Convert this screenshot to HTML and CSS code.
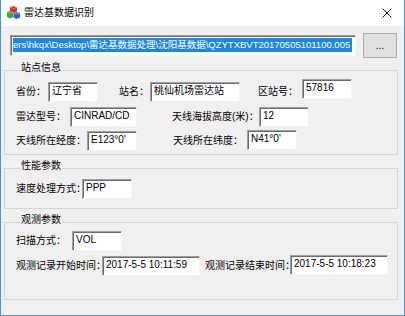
FILE: index.html
```html
<!DOCTYPE html>
<html>
<head>
    <meta charset="utf-8">
    <title>雷达基数据识别</title>
    <link rel="stylesheet" href="styles.css">
</head>
<body>
    <div class="window">
        <div class="titlebar">
            <svg class="app-icon" width="13" height="13" viewBox="0 0 13 13">
                <path d="M3 1 L7 0 L10 1.5 L10 5.5 L6.5 7 L3 5.5 Z" fill="#d9342b"/>
                <path d="M3 1 L6.5 2.5 L10 1.5" fill="none" stroke="#f08a80" stroke-width="0.8"/>
                <path d="M0 6 L3 5 L6 6 L6 11 L3 12.5 L0 11 Z" fill="#3aa83a"/>
                <path d="M0 6 L3 7 L6 6" fill="none" stroke="#8fd88f" stroke-width="0.8"/>
                <path d="M6.5 7 L9.5 6 L13 7 L13 11.5 L9.5 13 L6.5 11.5 Z" fill="#2a66c8"/>
                <path d="M6.5 7 L9.5 8 L13 7" fill="none" stroke="#8ab4f0" stroke-width="0.8"/>
            </svg>
            <span class="title">雷达基数据识别</span>
            <svg class="close" width="10" height="10" viewBox="0 0 10 10">
                <path d="M0.5 0.5 L9.5 9.5 M9.5 0.5 L0.5 9.5" stroke="#222" stroke-width="1"/>
            </svg>
        </div>
        <div class="client">
            <div class="path-row">
                <div class="textbox path-box">
                    <span class="selected">ers\hkqx\Desktop\雷达基数据处理\沈阳基数据\QZYTXBVT20170505101100.005</span>
                </div>
                <div class="button">...</div>
            </div>

            <fieldset class="group group-site">
                <legend>站点信息</legend>
                <div class="row">
                    <span class="label w32">省份：</span>
                    <div class="textbox w50">辽宁省</div>
                    <span class="label w31 ml21">站名：</span>
                    <div class="textbox w90">桃仙机场雷达站</div>
                    <span class="label w44 ml18">区站号：</span>
                    <div class="textbox w50 up3">57816</div>
                </div>
                <div class="row mt5">
                    <span class="label w54">雷达型号：</span>
                    <div class="textbox w67">CINRAD/CD</div>
                    <span class="label w87 ml35">天线海拔高度(米)：</span>
                    <div class="textbox w50">12</div>
                </div>
                <div class="row mt4">
                    <span class="label w71">天线所在经度：</span>
                    <div class="textbox w50">E123°0'</div>
                    <span class="label w74 ml36">天线所在纬度：</span>
                    <div class="textbox w50 up1">N41°0'</div>
                </div>
            </fieldset>

            <fieldset class="group group-perf">
                <legend>性能参数</legend>
                <div class="row">
                    <span class="label w66">速度处理方式：</span>
                    <div class="textbox w50">PPP</div>
                </div>
            </fieldset>

            <fieldset class="group group-obs">
                <legend>观测参数</legend>
                <div class="row">
                    <span class="label w56">扫描方式：</span>
                    <div class="textbox w50">VOL</div>
                </div>
                <div class="row mt5">
                    <span class="label w86">观测记录开始时间：</span>
                    <div class="textbox w98">2017-5-5 10:11:59</div>
                    <span class="label w85 ml5">观测记录结束时间：</span>
                    <div class="textbox w98 up1">2017-5-5 10:18:23</div>
                </div>
            </fieldset>
        </div>
    </div>
</body>
</html>
```

FILE: styles.css
```css
body {
    margin: 0;
    font-family: "Liberation Sans", "Noto Sans CJK SC", sans-serif;
    font-size: 10px;
    color: #000;
    background: #f0f0f0;
}
.window {
    width: 405px;
    height: 316px;
    box-sizing: border-box;
    border: 1px solid #4b95dc;
    border-top: none;
    background: #f0f0f0;
    display: flex;
    flex-direction: column;
}
.titlebar {
    height: 26px;
    background: #fff;
    display: flex;
    align-items: center;
    padding-left: 6px;
}
.app-icon {
    margin-top: -1px;
}
.title {
    margin-left: 4px;
    font-size: 10px;
    line-height: 12px;
}
.close {
    margin-left: auto;
    margin-right: 12px;
}
.client {
    flex: 1;
    padding: 7px 0 0 3px;
}
.path-row {
    display: flex;
    align-items: center;
    height: 25px;
}
.textbox {
    box-sizing: border-box;
    height: 20px;
    background: #fff;
    border-style: solid;
    border-width: 1px;
    border-color: #a0a0a0 #f4f4f4 #f4f4f4 #a0a0a0;
    box-shadow: inset 1px 1px 0 #6d6d6d;
    padding: 2px 0 0 3px;
    line-height: 12px;
    white-space: nowrap;
    overflow: hidden;
    font-size: 10px;
}
.path-box {
    margin-left: 6px;
    width: 346px;
    height: 21px;
    padding: 2px 0 0 2px;
}
.selected {
    display: inline-block;
    background: #1f86e0;
    color: #fff;
    font-size: 9.5px;
    line-height: 14px;
    padding-right: 2px;
}
.button {
    margin-left: 7px;
    width: 34px;
    height: 25px;
    box-sizing: border-box;
    background: #e1e1e1;
    border: 1px solid #adadad;
    text-align: center;
    line-height: 24px;
    font-size: 10px;
}
.group {
    width: 394px;
    box-sizing: border-box;
    margin: 2px 0 0 0;
    border: 1px solid #d5d5d5;
    padding: 0 0 3px 11px;
}
.group legend {
    font-size: 10px;
    line-height: 12px;
    padding: 0 1px 5px 1px;
    margin-left: 4px;
}
.group-site {
    margin-top: 4px;
    padding-top: 3px;
}
.group-perf {
    margin-top: 5px;
    padding-top: 2px;
    padding-bottom: 9px;
}
.group-obs {
    margin-top: 5px;
    padding-top: 0;
    padding-bottom: 23px;
}
.row {
    display: flex;
    align-items: center;
    height: 20px;
}
.label {
    flex-shrink: 0;
    white-space: nowrap;
    line-height: 20px;
}
.up1 { margin-top: -2px; }
.up3 { margin-top: -6px; }
.mt4 { margin-top: 4px; }
.mt5 { margin-top: 5px; }
.ml5 { margin-left: 5px; }
.ml18 { margin-left: 18px; }
.ml21 { margin-left: 21px; }
.ml35 { margin-left: 35px; }
.ml36 { margin-left: 36px; }
.w31 { width: 31px; }
.w32 { width: 32px; }
.w44 { width: 44px; }
.w50 { width: 50px; }
.w54 { width: 54px; }
.w56 { width: 56px; }
.w66 { width: 66px; }
.w67 { width: 67px; }
.w71 { width: 71px; }
.w74 { width: 74px; }
.w85 { width: 85px; }
.w86 { width: 86px; }
.w87 { width: 87px; }
.w90 { width: 90px; }
.w98 { width: 98px; }
```
